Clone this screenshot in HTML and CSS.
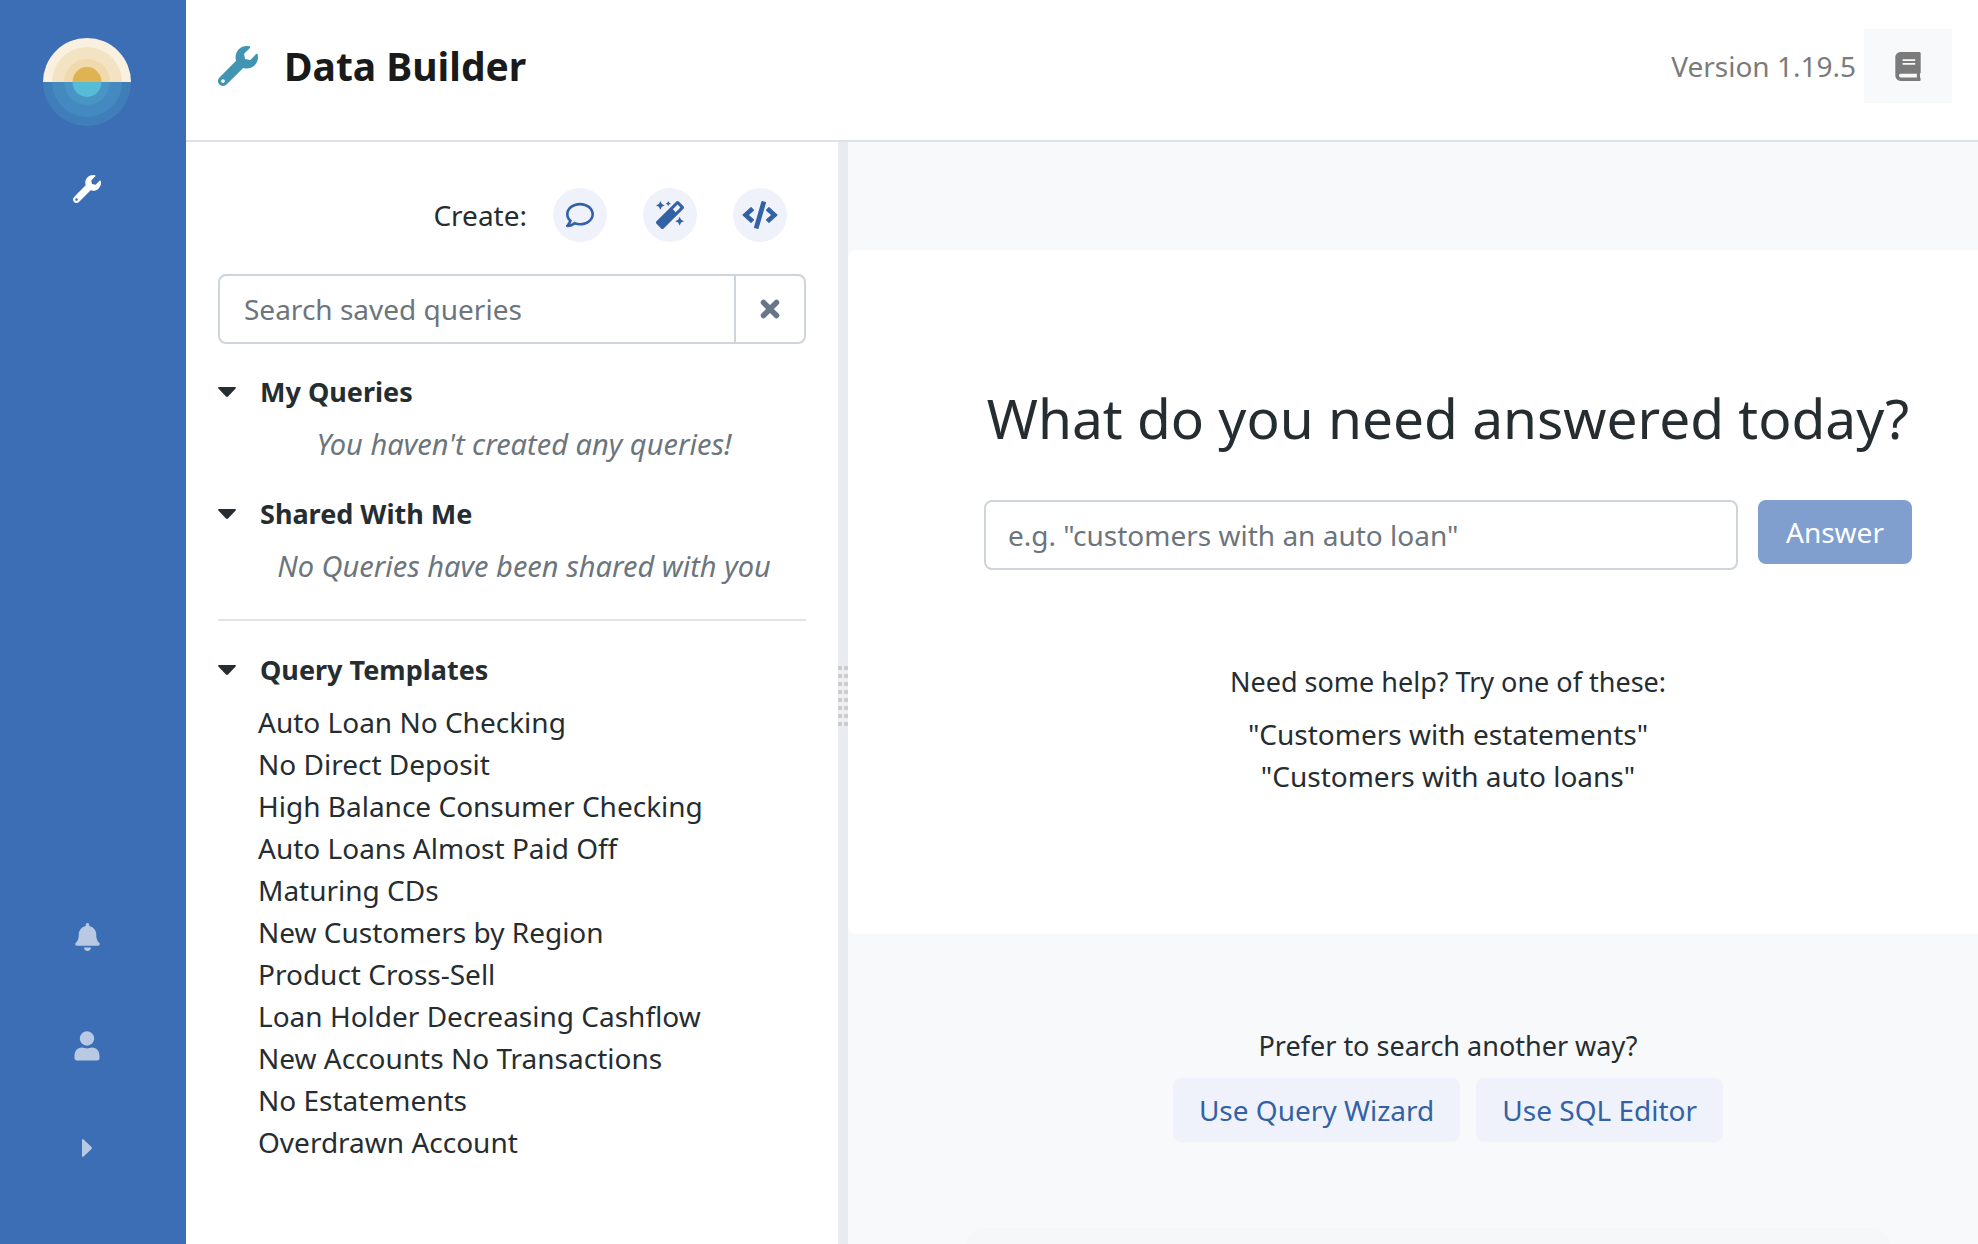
FILE: index.html
```html
<!DOCTYPE html>
<html lang="en">
<head>
<meta charset="utf-8">
<title>Data Builder</title>
<link rel="stylesheet" href="styles.css">
</head>
<body>
<svg class="sprite" aria-hidden="true">
  <symbol id="wrench" viewBox="0 0 512 512"><path d="M507.73 109.1c-2.24-9.03-13.54-12.09-20.12-5.51l-74.36 74.36-67.88-11.31-11.31-67.88 74.36-74.36c6.62-6.62 3.43-17.9-5.66-20.16-47.38-11.74-99.55.91-136.58 37.93-39.64 39.64-50.55 97.1-34.05 147.2L18.74 402.76c-24.99 24.99-24.99 65.51 0 90.5 24.99 24.99 65.51 24.99 90.5 0l213.21-213.21c50.12 16.71 107.47 5.68 147.37-34.22 37.07-37.07 49.7-89.32 37.91-136.73zM64 472c-13.25 0-24-10.75-24-24 0-13.26 10.75-24 24-24s24 10.74 24 24c0 13.25-10.75 24-24 24z"/></symbol>
  <symbol id="caret" viewBox="0 0 18 10"><path d="M1 0h16q1.500 .3 .6 1.600L10.300 9.300q-1.300 1.200-2.600 0L.4 1.600Q-.5 .3 1 0z"/></symbol>
</svg>
<div class="app">
  <nav class="rail" aria-label="Main">
    <div class="rail-group">
      <svg class="logo" viewBox="-44 -44 88 88" aria-label="Logo">
        <g id="sun">
          <path fill="#faf0df" d="M-44 0a44 44 0 0 1 88 0z"/>
          <path fill="#f4e3c2" d="M-35 0a35 35 0 0 1 70 0z"/>
          <path fill="#f0d9aa" d="M-23 0a23 23 0 0 1 46 0z"/>
          <path fill="#dfb351" d="M-14.500 0a14.500 15 0 0 1 29 0z"/>
        </g>
        <path fill="#407eba" d="M-44 0a44 44 0 0 0 88 0z"/>
        <path fill="#4489c0" d="M-35 0a35 35 0 0 0 70 0z"/>
        <path fill="#4794c5" d="M-23 0a23 23 0 0 0 46 0z"/>
        <path fill="#57bdd7" d="M-14.500 0a14.500 15 0 0 0 29 0z"/>
      </svg>
      <a class="rail-link active" href="#" aria-label="Data Builder"><svg width="28" height="28"><use href="#wrench"/></svg></a>
    </div>
    <div class="rail-group bottom">
      <a class="rail-link" href="#" aria-label="Notifications"><svg width="25" height="28" viewBox="0 0 448 512"><path d="M224 512c35.320 0 63.970-28.650 63.970-64H160.030c0 35.350 28.650 64 63.970 64zm215.390-149.710c-19.320-20.760-55.470-51.990-55.470-154.290 0-77.700-54.480-139.900-127.940-155.160V32c0-17.670-14.320-32-31.980-32s-31.980 14.330-31.980 32v20.840C118.560 68.100 64.080 130.300 64.080 208c0 102.300-36.150 133.530-55.470 154.290-6 6.450-8.660 14.160-8.610 21.710.11 16.400 12.980 32 32.100 32h383.800c19.120 0 32-15.600 32.100-32 .05-7.550-2.610-15.270-8.610-21.710z"/></svg></a>
      <a class="rail-link" href="#" aria-label="Account"><svg width="26" height="30" viewBox="0 0 26 30"><circle cx="13" cy="7.500" r="7.200"/><path d="M8 16.600q5 1.600 10 0c5 0 7.500 4 7.500 8.400v2q0 2.500-2.500 2.500H3Q.5 29.500.5 27v-2c0-4.400 2.500-8.400 7.500-8.400z"/></svg></a>
      <a class="rail-link rail-toggle" href="#" aria-label="Expand menu"><svg width="10" height="18" viewBox="0 0 10 18"><path d="M0 1v16q.3 1.500 1.600.6l7.700-7.300q1.200-1.300 0-2.600L1.600.4Q.3-.5 0 1z"/></svg></a>
    </div>
  </nav>
  <div class="page">
    <header class="topbar">
      <svg class="title-icon" width="40" height="40"><use href="#wrench"/></svg>
      <h1>Data Builder</h1>
      <span class="version">Version 1.19.5</span>
      <button class="docs" type="button" aria-label="Documentation"><svg width="26" height="29" viewBox="0 0 448 512"><path d="M448 360V24c0-13.300-10.700-24-24-24H96C43 0 0 43 0 96v320c0 53 43 96 96 96h328c13.300 0 24-10.700 24-24v-16c0-7.500-3.500-14.300-8.900-18.700-4.200-15.400-4.200-59.300 0-74.700 5.400-4.300 8.900-11.100 8.900-18.600zM128 134c0-3.300 2.700-6 6-6h212c3.300 0 6 2.700 6 6v20c0 3.300-2.700 6-6 6H134c-3.300 0-6-2.700-6-6v-20zm0 64c0-3.300 2.700-6 6-6h212c3.300 0 6 2.700 6 6v20c0 3.300-2.700 6-6 6H134c-3.300 0-6-2.700-6-6v-20zm253.400 250H96c-17.700 0-32-14.300-32-32 0-17.600 14.400-32 32-32h285.400c-1.900 17.100-1.900 46.900 0 64z"/></svg></button>
    </header>
    <div class="body">
      <aside class="queries">
        <div class="create">
          <span class="create-label">Create:</span>
          <button class="round" type="button" aria-label="Question"><svg width="28" height="28" viewBox="0 0 512 512"><path d="M256 32C114.600 32 0 125.100 0 240c0 47.600 19.900 91.200 52.900 126.300C38 405.700 7 439.100 6.500 439.500c-6.600 7-8.400 17.200-4.600 26S14.400 480 24 480c61.500 0 110-25.700 139.100-46.300C192 442.800 223.200 448 256 448c141.400 0 256-93.100 256-208S397.400 32 256 32zm0 368c-26.700 0-53.100-4.100-78.400-12.100l-22.700-7.200-19.500 13.800c-14.300 10.100-33.900 21.400-57.500 29 7.300-12.100 14.400-25.700 19.900-40.200l10.600-28.100-20.600-21.800C69.700 314.100 48 282.200 48 240c0-88.200 93.300-160 208-160s208 71.800 208 160-93.300 160-208 160z"/></svg></button>
          <button class="round" type="button" aria-label="Query wizard"><svg width="28" height="28" viewBox="0 0 512 512"><path d="M224 96l16-32 32-16-32-16-16-32-16 32-32 16 32 16 16 32zM80 160l26.660-53.330L160 80l-53.340-26.670L80 0 53.340 53.330 0 80l53.340 26.670L80 160zm352 128l-26.660 53.330L352 368l53.340 26.670L432 448l26.660-53.330L512 368l-53.340-26.670L432 288zm70.620-193.770L417.770 9.380C411.530 3.120 403.340 0 395.150 0c-8.190 0-16.380 3.120-22.630 9.380L9.380 372.520c-12.500 12.500-12.500 32.760 0 45.250l84.850 84.850c6.250 6.250 14.440 9.370 22.620 9.370 8.190 0 16.380-3.120 22.630-9.370l363.140-363.150c12.500-12.480 12.500-32.750 0-45.240zM359.450 203.460l-50.910-50.910 86.600-86.600 50.910 50.910-86.600 86.600z"/></svg></button>
          <button class="round" type="button" aria-label="SQL editor"><svg width="36" height="28" viewBox="0 0 640 512"><path d="M278.900 511.500l-61-17.700c-6.400-1.800-10-8.500-8.200-14.900L346.200 8.700c1.800-6.400 8.500-10 14.900-8.200l61 17.700c6.400 1.800 10 8.500 8.200 14.900L293.800 503.300c-1.900 6.400-8.500 10.100-14.900 8.200zm-114-112.200l43.500-46.400c4.600-4.900 4.300-12.700-.8-17.200L117 256l90.600-79.700c5.100-4.500 5.500-12.300.8-17.200l-43.500-46.400c-4.500-4.800-12.100-5.100-17-.5L3.800 247.200c-5.100 4.700-5.100 12.800 0 17.500l144.100 135.100c4.900 4.600 12.500 4.400 17-.5zm327.200.6l144.100-135.100c5.100-4.700 5.100-12.800 0-17.500L492.100 112.100c-4.800-4.500-12.400-4.300-17 .5L431.600 159c-4.600 4.900-4.300 12.700.8 17.200L523 256l-90.600 79.700c-5.100 4.500-5.500 12.300-.8 17.200l43.500 46.400c4.500 4.900 12.100 5.100 17 .6z"/></svg></button>
        </div>
        <div class="search">
          <input type="text" aria-label="Search saved queries" placeholder="Search saved queries">
          <button class="clear" type="button" aria-label="Clear search"><svg width="20" height="20" viewBox="0 0 20 20"><path d="M3.500 3.500l13 13m0-13l-13 13" stroke="currentColor" stroke-width="5.500" stroke-linecap="round"/></svg></button>
        </div>
        <section class="group">
          <h2><svg class="caret"><use href="#caret"/></svg>My Queries</h2>
          <p class="empty">You haven't created any queries!</p>
        </section>
        <section class="group">
          <h2><svg class="caret"><use href="#caret"/></svg>Shared With Me</h2>
          <p class="empty">No Queries have been shared with you</p>
        </section>
        <hr>
        <section class="group">
          <h2><svg class="caret"><use href="#caret"/></svg>Query Templates</h2>
          <ul class="templates">
            <li><a href="#">Auto Loan No Checking</a></li>
            <li><a href="#">No Direct Deposit</a></li>
            <li><a href="#">High Balance Consumer Checking</a></li>
            <li><a href="#">Auto Loans Almost Paid Off</a></li>
            <li><a href="#">Maturing CDs</a></li>
            <li><a href="#">New Customers by Region</a></li>
            <li><a href="#">Product Cross-Sell</a></li>
            <li><a href="#">Loan Holder Decreasing Cashflow</a></li>
            <li><a href="#">New Accounts No Transactions</a></li>
            <li><a href="#">No Estatements</a></li>
            <li><a href="#">Overdrawn Account</a></li>
          </ul>
        </section>
      </aside>
      <div class="splitter"><div class="grip"></div></div>
      <main class="main">
        <section class="ask">
          <h2>What do you need answered today?</h2>
          <form class="ask-form">
            <input type="text" aria-label="Question" placeholder="e.g. &quot;customers with an auto loan&quot;">
            <button class="answer" type="button">Answer</button>
          </form>
          <p class="help">Need some help? Try one of these:</p>
          <a href="#">"Customers with estatements"</a>
          <a href="#">"Customers with auto loans"</a>
        </section>
        <section class="other">
          <p>Prefer to search another way?</p>
          <div class="other-buttons">
            <button class="soft" type="button">Use Query Wizard</button>
            <button class="soft" type="button">Use SQL Editor</button>
          </div>
        </section>
        <div class="next-card"></div>
      </main>
    </div>
  </div>
</div>
</body>
</html>
```

FILE: styles.css
```css
* { box-sizing: border-box; }

body {
  margin: 0;
  color: #262d31;
  font: 28px/42px "Noto Sans", "Open Sans", sans-serif;
}

h1, h2, p, ul { margin: 0; padding: 0; }
a { color: inherit; text-decoration: none; }
svg { display: block; fill: currentColor; }
button, input { font: inherit; border: 0; padding: 0; margin: 0; }
button { cursor: pointer; }
input::placeholder { color: #6c757d; opacity: 1; }

.sprite { position: absolute; width: 0; height: 0; }

.app {
  display: flex;
  height: 100vh;
  overflow: hidden;
}

/* Left rail */
.rail {
  flex: none;
  width: 186px;
  padding: 38px 12px 86px 0;
  background: #3b6eb5;
  display: flex;
  flex-direction: column;
  justify-content: space-between;
}
.rail-group {
  display: flex;
  flex-direction: column;
  align-items: center;
  gap: 46px;
}
.rail-group.bottom { gap: 75px; }
.logo { width: 88px; height: 88px; }
.rail-link { color: #b9c9e4; height: 34px; display: flex; align-items: center; }
.rail-link.active { color: #fff; }
.rail-toggle { height: 20px; }

.page {
  flex: 1;
  min-width: 0;
  display: flex;
  flex-direction: column;
}

/* Header */
.topbar {
  flex: none;
  height: 142px;
  padding: 0 26px 8px 32px;
  border-bottom: 2px solid #dee2e6;
  display: flex;
  align-items: center;
}
.title-icon { color: #4194b2; }
.topbar h1 {
  flex: 1;
  padding-left: 26px;
  font-size: 39px;
  line-height: 56px;
  color: #1a1a1a;
}
.version { color: #7b7b7b; padding-right: 8px; }
.docs {
  width: 88px;
  height: 74px;
  background: #f8f9fb;
  color: #7b7b7b;
  display: grid;
  place-items: center;
}

.body { flex: 1; min-height: 0; display: flex; }

/* Saved queries */
.queries {
  flex: none;
  width: 652px;
  padding: 46px 32px 0;
}
.create {
  display: flex;
  justify-content: flex-end;
  align-items: center;
  gap: 36px;
  padding-right: 19px;
}
.create-label { margin-right: -10px; }
.round {
  width: 54px;
  height: 54px;
  border-radius: 50%;
  background: #eff2fa;
  color: #3262a5;
  display: grid;
  place-items: center;
}
.search {
  display: flex;
  height: 70px;
  margin: 32px 0 27px;
  border: 2px solid #ced4da;
  border-radius: 8px;
}
.search input {
  flex: 1;
  min-width: 0;
  padding: 0 24px;
  background: none;
}
.clear {
  width: 70px;
  background: none;
  border-left: 2px solid #ced4da;
  color: #687788;
  display: grid;
  place-items: center;
}
.group h2 {
  display: flex;
  align-items: center;
  gap: 24px;
  font-size: 27px;
  line-height: 42px;
}
.caret { width: 18px; height: 10px; }
.empty {
  padding: 10px 0 28px 24px;
  text-align: center;
  font-size: 29px;
  font-style: italic;
  color: #6c757d;
}
hr {
  margin: 4px 0 28px;
  border: 0;
  height: 2px;
  background: #e3e3e3;
}
.templates { list-style: none; padding: 10px 0 0 40px; }

/* Pane divider */
.splitter {
  flex: none;
  width: 10px;
  padding-top: 6px;
  background: #eaebf0;
  display: flex;
  align-items: center;
}
.grip {
  width: 10px;
  height: 60px;
  background: repeating-linear-gradient(#0000 0 4px, #eeeef0 4px 8px),
    linear-gradient(90deg, #ccc 4px, #eeeef0 4px 6px, #ccc 6px);
}

/* Question pane */
.main {
  flex: 1;
  min-width: 0;
  padding-top: 108px;
  background: #f8f9fb;
  text-align: center;
  overflow: hidden;
}
.ask {
  margin-right: -70px;
  min-height: 684px;
  padding: 134px 136px 0;
  border-radius: 8px;
  background: #fff;
  display: flex;
  flex-direction: column;
  align-items: center;
}
.ask h2 {
  font-size: 55px;
  font-weight: 400;
  line-height: 68px;
  white-space: nowrap;
}
.ask-form {
  align-self: stretch;
  display: flex;
  align-items: flex-start;
  gap: 20px;
  margin: 48px 0 91px;
}
.ask-form input {
  flex: 1;
  min-width: 0;
  height: 70px;
  padding: 0 22px;
  border: 2px solid #ced4da;
  border-radius: 8px;
}
.answer {
  width: 154px;
  height: 64px;
  border-radius: 8px;
  background: #809fcf;
  color: #fff;
}
.help { padding-bottom: 10px; font-size: 27px; }
.other {
  margin-right: -70px;
  padding-top: 91px;
}
.other p { font-size: 27px; }
.other-buttons {
  display: flex;
  justify-content: center;
  gap: 16px;
  padding-top: 11px;
}
.soft {
  height: 64px;
  padding: 0 26px;
  border-radius: 8px;
  background: #eff2fa;
  color: #3262a5;
}
.next-card {
  height: 120px;
  margin: 86px 89px 0 119px;
  border-radius: 16px;
  background: #f6f7f8;
}
```
